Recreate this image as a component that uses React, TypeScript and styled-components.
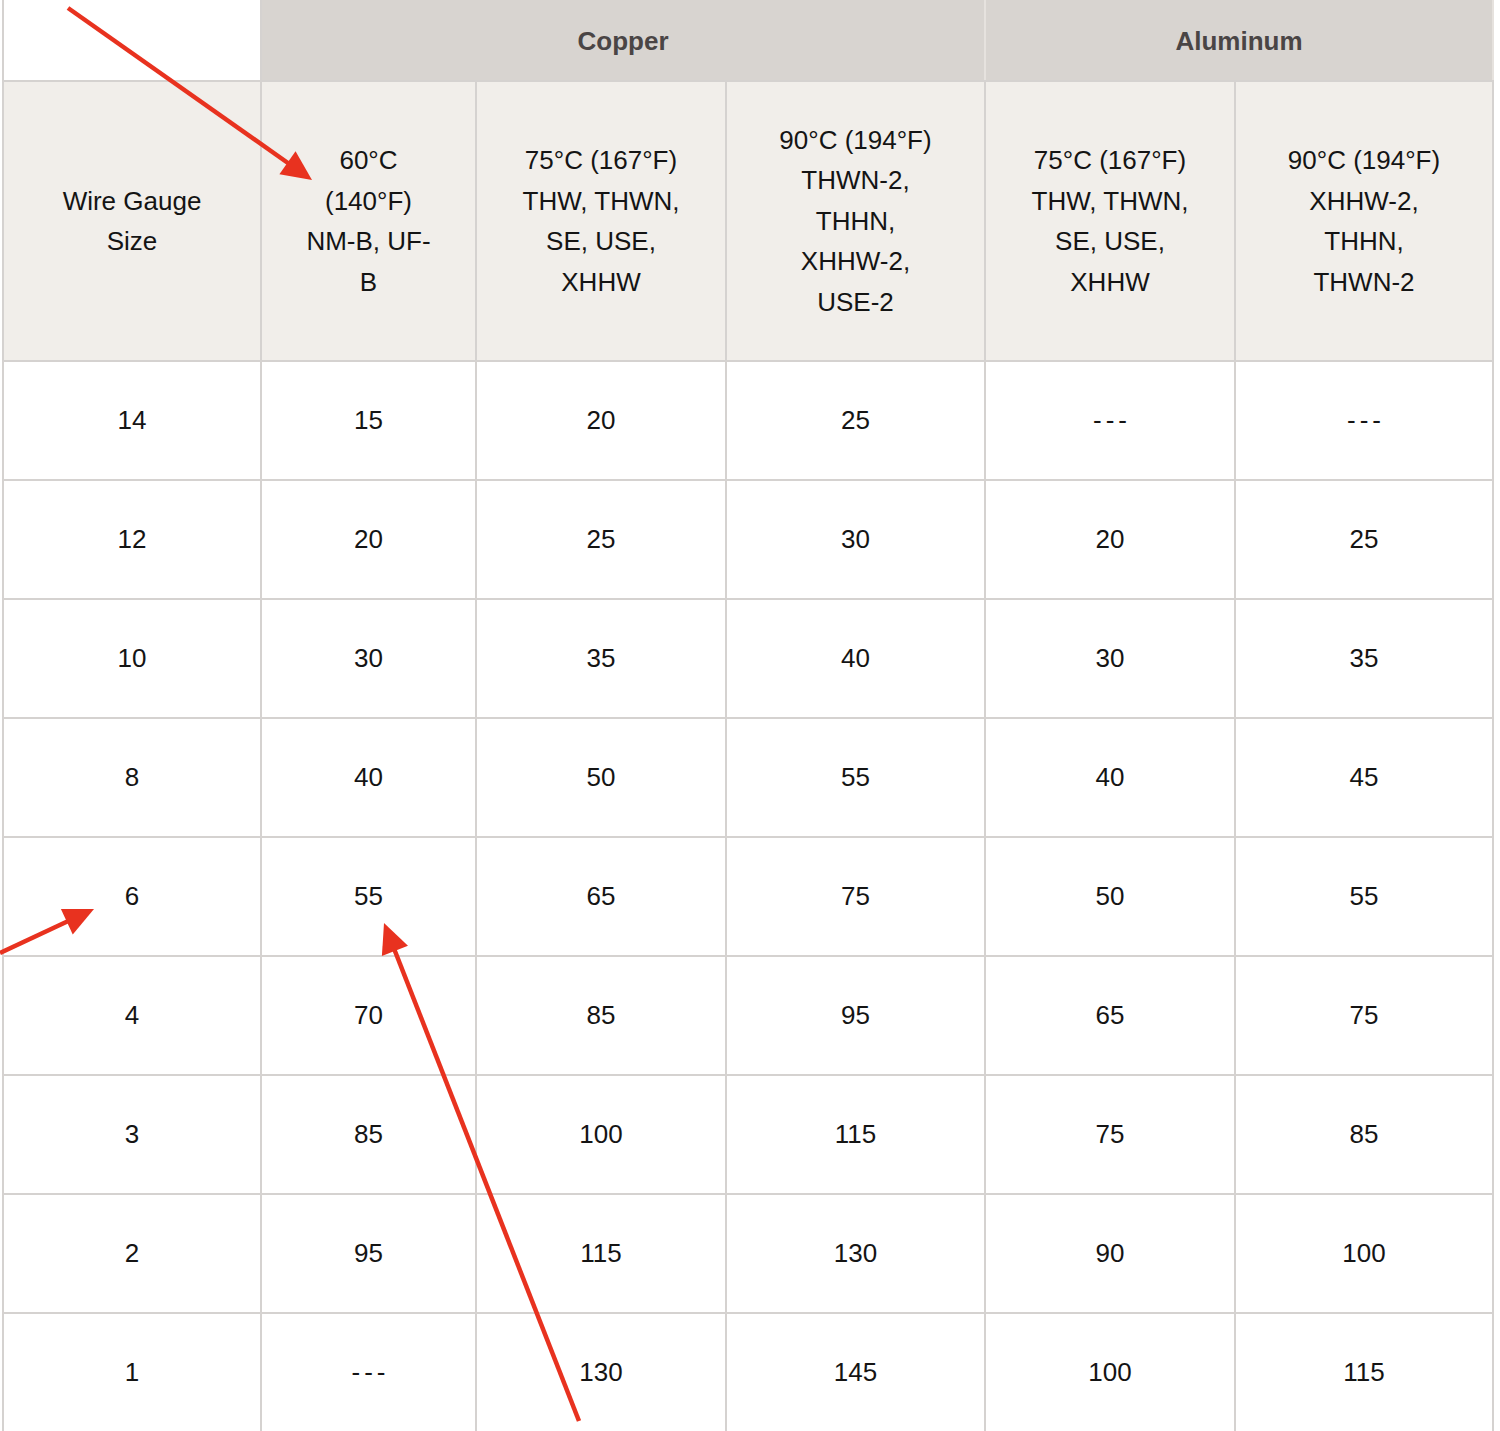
import React from "react";
import styled, { createGlobalStyle } from "styled-components";

const GlobalStyle = createGlobalStyle`
  html, body {
    margin: 0;
    padding: 0;
    background: #ffffff;
  }
  body {
    font-family: "Liberation Sans", Arial, Helvetica, sans-serif;
  }
`;

const COLS = [258, 215, 250, 259, 250, 258];

const HEADERS: string[][] = [
  ["Wire Gauge", "Size"],
  ["60°C", "(140°F)", "NM-B, UF-", "B"],
  ["75°C (167°F)", "THW, THWN,", "SE, USE,", "XHHW"],
  ["90°C (194°F)", "THWN-2,", "THHN,", "XHHW-2,", "USE-2"],
  ["75°C (167°F)", "THW, THWN,", "SE, USE,", "XHHW"],
  ["90°C (194°F)", "XHHW-2,", "THHN,", "THWN-2"],
];

const ROWS: string[][] = [
  ["14", "15", "20", "25", "---", "---"],
  ["12", "20", "25", "30", "20", "25"],
  ["10", "30", "35", "40", "30", "35"],
  ["8", "40", "50", "55", "40", "45"],
  ["6", "55", "65", "75", "50", "55"],
  ["4", "70", "85", "95", "65", "75"],
  ["3", "85", "100", "115", "75", "85"],
  ["2", "95", "115", "130", "90", "100"],
  ["1", "---", "130", "145", "100", "115"],
];

// arrows drawn on top of the screenshot: [x1, y1, tipX, tipY]
const ARROWS: [number, number, number, number][] = [
  [68, 8, 312, 180],
  [0, 953, 94, 909],
  [579, 1421, 384, 923],
];

export default function App() {
  return (
    <S.Page>
      <GlobalStyle />
      <S.Table>
        <colgroup>
          {COLS.map((w, i) => (
            <col key={i} style={{ width: w }} />
          ))}
        </colgroup>
        <thead>
          <S.BandRow>
            <S.Blank />
            <S.Band colSpan={3}>Copper</S.Band>
            <S.Band colSpan={2}>Aluminum</S.Band>
          </S.BandRow>
          <S.HeadRow>
            {HEADERS.map((lines, i) => (
              <S.Head key={i}>
                {lines.map((l, j) => (
                  <div key={j}>{l}</div>
                ))}
              </S.Head>
            ))}
          </S.HeadRow>
        </thead>
        <tbody>
          {ROWS.map((row, i) => (
            <S.Row key={i}>
              {row.map((v, j) => (
                <S.Cell key={j}>
                  {v === "---" ? <S.Dashes>{v}</S.Dashes> : v}
                </S.Cell>
              ))}
            </S.Row>
          ))}
        </tbody>
      </S.Table>
      <S.Overlay width="1500" height="1431" viewBox="0 0 1500 1431">
        {ARROWS.map(([x1, y1, x2, y2], i) => {
          const a = Math.atan2(y2 - y1, x2 - x1);
          const len = 30;
          const half = 14;
          const bx = x2 - len * Math.cos(a);
          const by = y2 - len * Math.sin(a);
          const px = -Math.sin(a) * half;
          const py = Math.cos(a) * half;
          return (
            <g key={i}>
              <line
                x1={x1}
                y1={y1}
                x2={bx + 4 * Math.cos(a)}
                y2={by + 4 * Math.sin(a)}
                stroke="#e8321f"
                strokeWidth={4.5}
              />
              <polygon
                points={`${x2},${y2} ${bx + px},${by + py} ${bx - px},${by - py}`}
                fill="#e8321f"
              />
            </g>
          );
        })}
      </S.Overlay>
    </S.Page>
  );
}

const S = {
  Page: styled.div`
    position: relative;
    width: 1500px;
    height: 1431px;
    overflow: hidden;
    padding-left: 2px;
    box-sizing: border-box;
  `,
  Table: styled.table`
    table-layout: fixed;
    width: 1492px;
    border-collapse: collapse;
    font-size: 26px;
    color: #141414;
  `,
  BandRow: styled.tr`
    height: 81px;
  `,
  Blank: styled.th`
    background: #ffffff;
    border: 2px solid #d5d2d0;
    border-top: none;
  `,
  Band: styled.th`
    background: #d8d4d0;
    color: #4a4545;
    font-weight: 700;
    font-size: 26px;
    text-align: center;
    vertical-align: middle;
    border-left: 2px solid #e6e2de;
    border-right: 2px solid #e6e2de;
    border-bottom: 2px solid #d5d2d0;
    padding: 3px 0 0;
  `,
  HeadRow: styled.tr`
    height: 280px;
  `,
  Head: styled.th`
    background: #f1eeea;
    font-weight: 400;
    line-height: 40.5px;
    text-align: center;
    vertical-align: middle;
    border: 2px solid #d5d2d0;
    padding: 0;
  `,
  Row: styled.tr`
    height: 119px;
  `,
  Cell: styled.td`
    text-align: center;
    vertical-align: middle;
    border: 2px solid #d5d2d0;
    padding: 0;
    background: #ffffff;
  `,
  Dashes: styled.span`
    letter-spacing: 4px;
    margin-right: -4px;
  `,
  Overlay: styled.svg`
    position: absolute;
    left: 0;
    top: 0;
    pointer-events: none;
  `,
};
